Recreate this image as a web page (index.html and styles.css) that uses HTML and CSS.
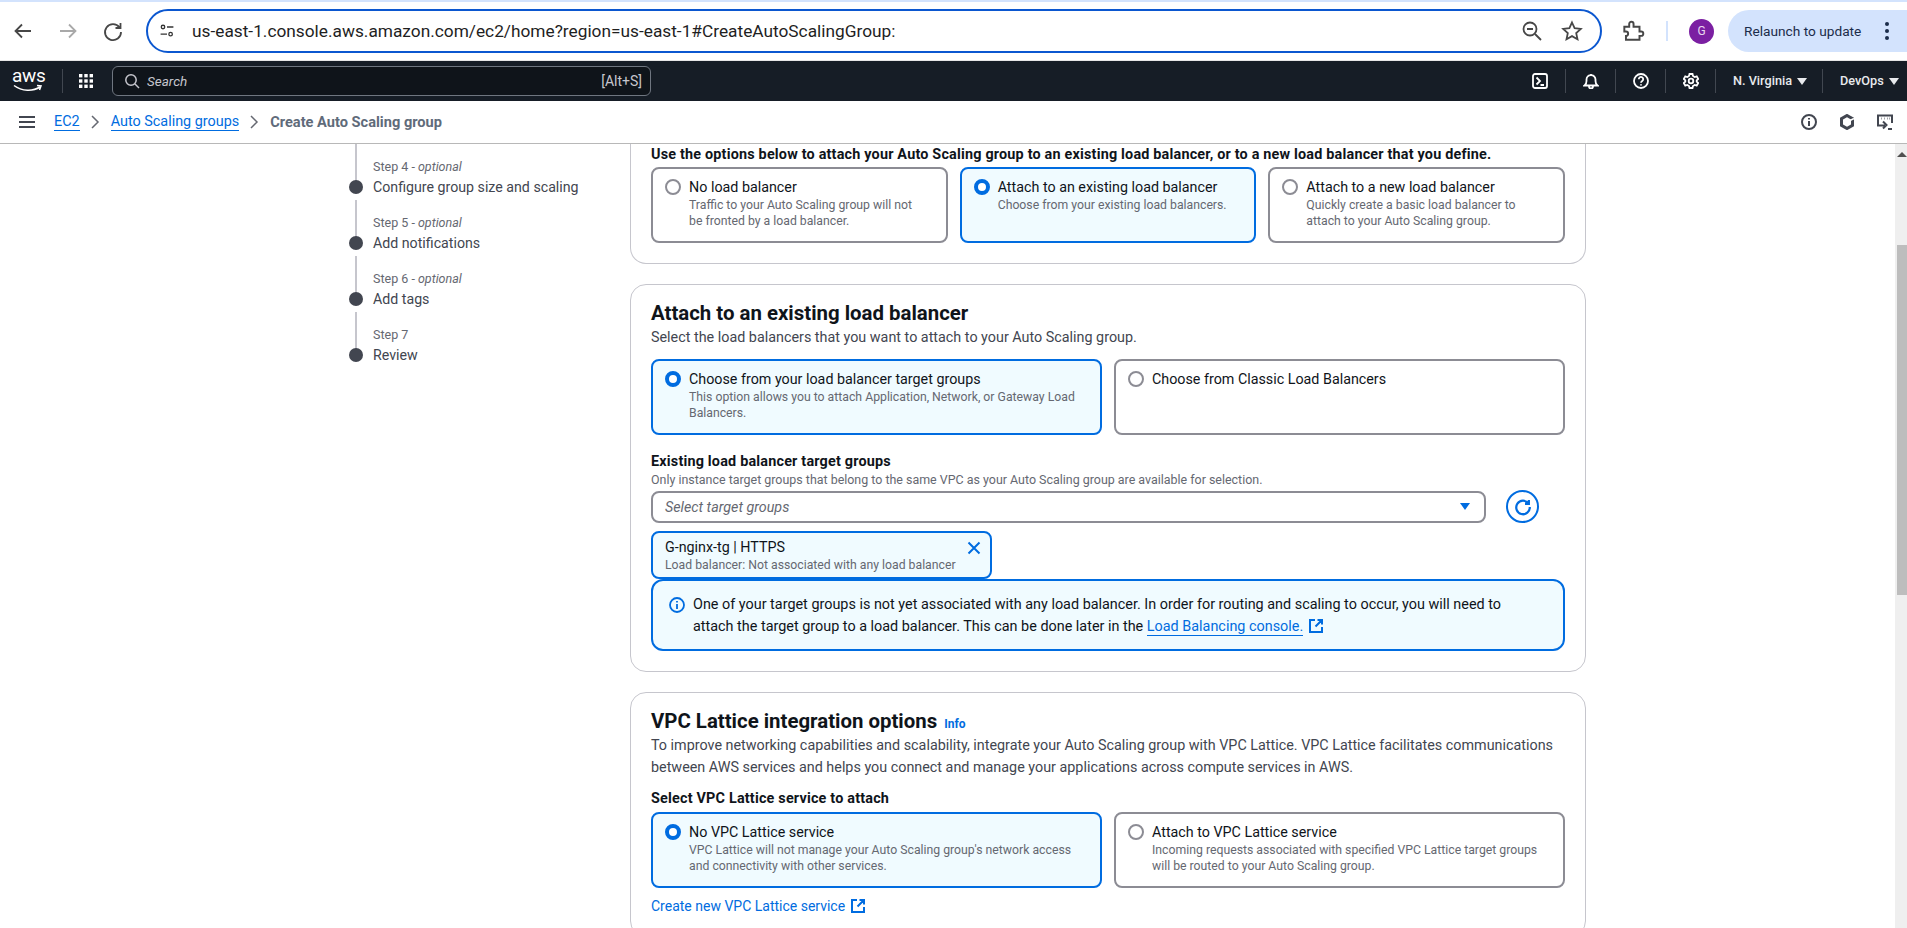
FILE: index.html
```html
<!DOCTYPE html>
<html lang="en">
<head>
<meta charset="utf-8">
<title>Create Auto Scaling group</title>
<link rel="stylesheet" href="styles.css">
</head>
<body>

<div class="tabstrip"></div>

<div class="toolbar">
  <svg class="tb-ico" viewBox="0 0 24 24"><path d="M20 12H5M11 5.500L4.500 12l6.500 6.500"/></svg>
  <svg class="tb-ico off" viewBox="0 0 24 24"><path d="M4 12h15M13 5.500l6.500 6.500-6.500 6.500"/></svg>
  <svg class="tb-ico" viewBox="0 0 24 24"><path d="M18.500 8.500A8 8 0 1 0 20 13M19.500 4v5h-5"/></svg>
  <div class="omnibox">
    <svg class="omni-tune" viewBox="0 0 20 20"><circle cx="5" cy="5" r="2.200"/><path d="M10 5h8M2 14h8"/><circle cx="14.500" cy="14" r="2.200"/></svg>
    <span class="url">us-east-1.console.aws.amazon.com/ec2/home?region=us-east-1#CreateAutoScalingGroup:</span>
    <svg class="omni-ico" viewBox="0 0 24 24"><circle cx="10" cy="10" r="6.500"/><path d="M7 10h6M15 15l6 6"/></svg>
    <svg class="omni-ico" viewBox="0 0 24 24"><path d="M12 3.500l2.600 5.700 6.200.7-4.600 4.200 1.300 6.100L12 17.100l-5.500 3.100 1.300-6.100-4.600-4.200 6.200-.7z"/></svg>
  </div>
  <svg class="tb-ico ext" viewBox="0 0 24 24"><path d="M4 8h4.500V5.500a2 2 0 0 1 4 0V8H18v4.500h1.500a2 2 0 0 1 0 4H18V20H5.500v-3.500a2 2 0 0 0 0-4H4z"/></svg>
  <span class="tb-sep"></span>
  <span class="avatar">G</span>
  <div class="relaunch">Relaunch to update <span class="dots"><i></i><i></i><i></i></span></div>
</div>

<header class="topnav">
  <div class="aws-logo">aws<svg viewBox="0 0 30 9"><path d="M1 1.500c8 6 19 6 26 1.500M24 1.500l4 .5-1.500 4"/></svg></div>
  <span class="nav-div"></span>
  <svg class="grid-ico" viewBox="0 0 16 16"><rect x="1" y="1" width="3.400" height="3.400"/><rect x="6.300" y="1" width="3.400" height="3.400"/><rect x="11.600" y="1" width="3.400" height="3.400"/><rect x="1" y="6.300" width="3.400" height="3.400"/><rect x="6.300" y="6.300" width="3.400" height="3.400"/><rect x="11.600" y="6.300" width="3.400" height="3.400"/><rect x="1" y="11.600" width="3.400" height="3.400"/><rect x="6.300" y="11.600" width="3.400" height="3.400"/><rect x="11.600" y="11.600" width="3.400" height="3.400"/></svg>
  <div class="searchbox">
    <svg class="nav-ico small" viewBox="0 0 16 16"><circle cx="7" cy="7" r="5.200"/><path d="M11 11l4 4"/></svg>
    <em>Search</em>
    <span class="kbd">[Alt+S]</span>
  </div>
  <div class="nav-right">
    <div class="nav-item"><svg class="nav-ico" viewBox="0 0 16 16"><rect x="1" y="1" width="14" height="14" rx="2"/><path d="M4.500 4.500L8 8l-3.500 3.500M8.500 12H12"/></svg></div>
    <div class="nav-item"><svg class="nav-ico" viewBox="0 0 16 16"><path d="M1.500 12.500h13c-1.500-1-2-2.500-2-4.500V6.500a4.500 4.500 0 0 0-9 0V8c0 2-.5 3.500-2 4.500zM6 13v.5a2 2 0 0 0 4 0V13M8 1v1"/></svg></div>
    <div class="nav-item"><svg class="nav-ico" viewBox="0 0 16 16"><circle cx="8" cy="8" r="7"/><path d="M5.800 6.200a2.200 2.200 0 1 1 3.400 1.800c-.8.500-1.200 1-1.200 1.800M8 11.200v1.300"/></svg></div>
    <div class="nav-item"><svg class="nav-ico" viewBox="0 0 16 16"><circle cx="8" cy="8" r="2.300"/><path d="M6.500 1h3l.5 2 1.700 1 2-.6 1.500 2.600-1.500 1.400v1.200l1.500 1.400-1.500 2.600-2-.6-1.700 1-.5 2h-3l-.5-2-1.700-1-2 .6L.8 10l1.500-1.400V7.400L.8 6l1.500-2.600 2 .6 1.700-1z"/></svg></div>
    <div class="nav-item text region">N. Virginia <span class="caret"></span></div>
    <div class="nav-item text acct">DevOps <span class="caret"></span></div>
  </div>
</header>

<div class="crumbbar">
  <div class="burger"><i></i><i></i><i></i></div>
  <a class="crumb">EC2</a>
  <svg class="chev" viewBox="0 0 10 16"><path d="M2 2l6 6-6 6"/></svg>
  <a class="crumb">Auto Scaling groups</a>
  <svg class="chev" viewBox="0 0 10 16"><path d="M2 2l6 6-6 6"/></svg>
  <span class="crumb-now">Create Auto Scaling group</span>
  <div class="crumb-tools">
    <svg class="tool-ico" viewBox="0 0 16 16"><circle cx="8" cy="8" r="7"/><path d="M8 7v5M8 4v1.600"/></svg>
    <svg class="tool-ico hex" viewBox="0 0 16 16"><path d="M8 1.500l5.500 3.200v6.600L8 14.500l-5.500-3.200V4.700z"/><path class="hex-cut" d="M8 8l7-3.500"/></svg>
    <svg class="tool-ico" viewBox="0 0 16 16"><path d="M8 11.500H1V1.500h14V9M4 4.500h.5M7 4.500h.5M10 4.500h.5M13 4.500h-.5M6 7.500l3.500 3.500L6 14.500M11 15h4"/></svg>
  </div>
</div>

<div class="page">
  <nav class="steps">
    <div class="step"><small>Step 4 - <em>optional</em></small><span>Configure group size and scaling</span></div>
    <div class="step"><small>Step 5 - <em>optional</em></small><span>Add notifications</span></div>
    <div class="step"><small>Step 6 - <em>optional</em></small><span>Add tags</span></div>
    <div class="step"><small>Step 7</small><span>Review</span></div>
  </nav>

  <main class="content">
    <section class="card card-cut">
      <p class="field-label">Use the options below to attach your Auto Scaling group to an existing load balancer, or to a new load balancer that you define.</p>
      <div class="tiles three">
        <div class="tile"><span class="radio"></span><div><b>No load balancer</b><p>Traffic to your Auto Scaling group will not<br>be fronted by a load balancer.</p></div></div>
        <div class="tile on"><span class="radio"></span><div><b>Attach to an existing load balancer</b><p>Choose from your existing load balancers.</p></div></div>
        <div class="tile"><span class="radio"></span><div><b>Attach to a new load balancer</b><p>Quickly create a basic load balancer to<br>attach to your Auto Scaling group.</p></div></div>
      </div>
    </section>

    <section class="card">
      <h2>Attach to an existing load balancer</h2>
      <p class="desc">Select the load balancers that you want to attach to your Auto Scaling group.</p>
      <div class="tiles two">
        <div class="tile on"><span class="radio"></span><div><b>Choose from your load balancer target groups</b><p>This option allows you to attach Application, Network, or Gateway Load<br>Balancers.</p></div></div>
        <div class="tile"><span class="radio"></span><div><b>Choose from Classic Load Balancers</b></div></div>
      </div>
      <p class="field-label mt">Existing load balancer target groups</p>
      <p class="hint">Only instance target groups that belong to the same VPC as your Auto Scaling group are available for selection.</p>
      <div class="select-row">
        <div class="select"><em>Select target groups</em><span class="caret blue"></span></div>
        <button class="refresh"><svg viewBox="0 0 16 16"><path d="M12.800 4.800A6 6 0 1 0 14 8M13.200 1.800v3.400H9.800"/></svg></button>
      </div>
      <div class="token">
        <div><b>G-nginx-tg | HTTPS</b><p>Load balancer: Not associated with any load balancer</p></div>
        <svg class="token-x" viewBox="0 0 16 16"><path d="M2.500 2.500l11 11M13.500 2.500l-11 11"/></svg>
      </div>
      <div class="alert">
        <svg class="alert-ico" viewBox="0 0 16 16"><circle cx="8" cy="8" r="7"/><path d="M8 7v5M8 4v1.600"/></svg>
        <p>One of your target groups is not yet associated with any load balancer. In order for routing and scaling to occur, you will need to attach the target group to a load balancer. This can be done later in the <a class="link">Load Balancing console.</a> <svg class="ext-ico" viewBox="0 0 16 16"><path d="M7 2H2v12h12V9M9.500 2H14v4.500M14 2L7.500 8.500"/></svg></p>
      </div>
    </section>

    <section class="card">
      <h2>VPC Lattice integration options <a class="info">Info</a></h2>
      <p class="desc">To improve networking capabilities and scalability, integrate your Auto Scaling group with VPC Lattice. VPC Lattice facilitates communications between AWS services and helps you connect and manage your applications across compute services in AWS.</p>
      <p class="field-label mt2">Select VPC Lattice service to attach</p>
      <div class="tiles two">
        <div class="tile on"><span class="radio"></span><div><b>No VPC Lattice service</b><p>VPC Lattice will not manage your Auto Scaling group's network access<br>and connectivity with other services.</p></div></div>
        <div class="tile"><span class="radio"></span><div><b>Attach to VPC Lattice service</b><p>Incoming requests associated with specified VPC Lattice target groups<br>will be routed to your Auto Scaling group.</p></div></div>
      </div>
      <p class="create"><a class="plain-link">Create new VPC Lattice service</a> <svg class="ext-ico" viewBox="0 0 16 16"><path d="M7 2H2v12h12V9M9.500 2H14v4.500M14 2L7.500 8.500"/></svg></p>
    </section>
  </main>

  <div class="scrollbar"><span class="sb-up"></span><div class="thumb"></div></div>
</div>

</body>
</html>
```

FILE: styles.css
```css
*{box-sizing:border-box;margin:0;padding:0;}
html,body{height:928px;overflow:hidden;}
body{display:flex;flex-direction:column;background:#fff;color:#0f141a;font-family:Roboto,"Liberation Sans",sans-serif;font-size:14.3px;line-height:20px;}
svg{fill:none;stroke:currentColor;flex:none;}

/* browser chrome */
.tabstrip{height:2px;background:#d3e3fd;flex:none;}
.toolbar{height:58px;flex:none;display:flex;align-items:center;padding-left:11px;background:#fff;color:#474747;}
.tb-ico{width:24px;height:24px;stroke-width:1.8;margin-right:21px;}
.tb-ico.off{color:#a9a9a9;}
.tb-ico.ext{margin:0 0 0 18px;width:26px;height:26px;}
.omnibox{width:1456px;height:44px;border:2.5px solid #0b57d0;border-radius:22px;display:flex;align-items:center;padding:0 16px 0 11px;}
.omni-tune{width:16px;height:16px;stroke-width:1.6;margin-right:17px;color:#333;}
.url{flex:1;font-size:17.3px;color:#1f1f1f;}
.omni-ico{width:24px;height:24px;stroke-width:1.8;margin-left:16px;}
.tb-sep{width:2px;height:20px;background:#d3e3fd;margin:0 21px 0 20px;}
.avatar{width:25px;height:25px;border-radius:50%;background:#7b1fa2;color:#e8d6ef;font-size:12px;display:flex;align-items:center;justify-content:center;}
.relaunch{margin-left:14px;flex:1;height:42px;background:#d3e3fd;border-radius:21px 0 0 21px;display:flex;align-items:center;padding-left:16px;font-size:13.7px;color:#1b2c4a;white-space:pre;}
.dots{display:flex;flex-direction:column;gap:3px;margin-left:20px;}
.dots i{width:4px;height:4px;border-radius:50%;background:#1b2c4a;}

/* aws top bar */
.topnav{height:41px;flex:none;background:#161d26;display:flex;align-items:center;color:#fff;border-top:1px solid #e6e6e6;}
.aws-logo{width:32px;height:27px;margin-left:12px;font-size:19px;line-height:16px;text-align:center;letter-spacing:-.3px;color:#fff;}
.aws-logo svg{display:block;width:30px;height:9px;margin-left:1px;stroke-width:1.5;color:#fff;}
.nav-div{width:1px;height:24px;background:#414750;margin:0 15px 0 18px;}
.grid-ico{width:16px;height:16px;fill:#fff;stroke:none;}
.searchbox{width:539px;height:30px;border:1.5px solid #6f7680;border-radius:6px;background:#0f141a;display:flex;align-items:center;padding:0 8px 0 11px;margin-left:18px;color:#c6c6cd;}
.searchbox em{font-size:13.5px;margin-left:7px;flex:1;}
.kbd{font-size:14px;}
.nav-ico{width:16px;height:16px;stroke-width:1.8;color:#fff;}
.nav-ico.small{color:#c6c6cd;stroke-width:1.5;}
.nav-right{margin-left:auto;display:flex;align-items:center;height:24px;}
.nav-item{height:24px;width:50px;display:flex;align-items:center;justify-content:center;border-left:1px solid #414750;}
.nav-item:first-child{border-left:0;}
.nav-item.text{font-size:12.7px;font-weight:500;color:#e8eaed;justify-content:flex-start;gap:5px;white-space:nowrap;padding-left:17px;}
.nav-item.region{width:107px;}
.nav-item.acct{width:85px;}
.caret{display:inline-block;width:0;height:0;border-left:5px solid transparent;border-right:5px solid transparent;border-top:7px solid #e8eaed;}
.caret.blue{border-top-color:#006ce0;}

/* breadcrumb */
.crumbbar{height:43px;flex:none;display:flex;align-items:center;padding-left:19px;border-bottom:1px solid #b8b8b8;background:#fff;}
.burger{width:16px;display:flex;flex-direction:column;gap:3px;margin-right:19px;}
.burger i{height:2px;background:#424650;}
.crumb{color:#006ce0;font-size:14.4px;border-bottom:1px solid #006ce0;line-height:17px;}
.chev{width:10px;height:16px;margin:0 11px 0 10px;color:#656871;stroke-width:1.5;}
.crumb-now{font-size:14.6px;font-weight:700;color:#5f6b7a;}
.crumb-tools{margin-left:auto;display:flex;gap:22px;margin-right:14px;color:#424650;}
.tool-ico{width:16px;height:16px;stroke-width:2;}
.tool-ico.hex{stroke-width:3;}
.hex-cut{stroke:#fff;stroke-width:1.5;}

/* page */
.page{flex:1;display:flex;overflow:hidden;min-height:0;}
.steps{width:630px;flex:none;padding-left:349px;}
.step{position:relative;height:56px;padding:15px 0 0 24px;white-space:nowrap;display:flex;flex-direction:column;color:#424650;}
.step small{font-size:12.5px;line-height:16px;color:#656871;}
.step span{font-size:14.2px;line-height:22px;margin-top:1px;}
.step::before{content:"";position:absolute;left:6px;top:0;height:40px;width:2px;background:#c6c6cd;}
.step::after{content:"";position:absolute;left:0;top:36px;width:14px;height:14px;border-radius:50%;background:#424650;}

.content{width:956px;flex:none;display:flex;flex-direction:column;gap:20px;}
.card{border:1px solid #c6c6cd;border-radius:16px;padding:0 20px 20px;background:#fff;flex:none;}
.card-cut{border-top:0;border-radius:0 0 16px 16px;}
.card-cut .field-label{padding-top:2px;}
.card-cut .tiles{margin-top:3px;}
h2{font-size:20.4px;line-height:24px;font-weight:700;padding-top:16px;}
.info{font-size:12px;line-height:1;font-weight:700;color:#006ce0;margin-left:2px;}
.desc{color:#424650;font-size:14.35px;line-height:22px;margin-top:2px;}
.field-label{font-size:14.4px;letter-spacing:.19px;font-weight:700;line-height:18px;}
.field-label.mt{margin-top:17px;line-height:20px;}
.field-label.mt2{margin-top:11px;}
.hint{font-size:12.45px;line-height:16px;color:#656871;}

.tiles{display:grid;gap:12px;margin-top:4px;}
.desc+.tiles{margin-top:10px;}
.tiles.three{grid-template-columns:repeat(3,1fr);}
.tiles.two{grid-template-columns:repeat(2,1fr);}
.tile{border:2px solid #8c8c94;border-radius:8px;padding:8px 12px 0;height:76px;display:flex;gap:8px;background:#fff;}
.tile.on{border-color:#006ce0;background:#f0fbff;}
.tile b{font-weight:400;display:block;line-height:20px;}
.tile p{font-size:12.25px;line-height:16px;color:#656871;white-space:nowrap;}
.radio{width:16px;height:16px;border-radius:50%;border:2px solid #8c8c94;background:#fff;flex:none;margin-top:2px;}
.tile.on .radio{border:4.5px solid #006ce0;}

.select-row{display:flex;align-items:center;gap:20px;margin-top:2px;}
.select{width:835px;height:32px;border:2px solid #8c8c94;border-radius:8px;display:flex;align-items:center;justify-content:space-between;padding:0 14px 0 12px;color:#656871;}
.refresh{width:33px;height:33px;border-radius:50%;border:2px solid #006ce0;background:#fff;color:#006ce0;display:flex;align-items:center;justify-content:center;}
.refresh svg{width:18px;height:18px;stroke-width:2;}
.token{width:341px;height:48px;margin-top:8px;border:2px solid #006ce0;border-radius:8px;background:#f0fbff;display:flex;justify-content:space-between;padding:4px 8px 0 12px;}
.token b{font-weight:400;display:block;line-height:20px;}
.token p{font-size:12.25px;line-height:16px;color:#656871;}
.token-x{width:16px;height:16px;color:#006ce0;stroke-width:2;margin-top:3px;}
.alert{height:72px;border:2px solid #006ce0;border-radius:12px;background:#f0fbff;display:flex;gap:8px;padding:13px 50px 0 16px;}
.alert-ico{width:16px;height:16px;color:#006ce0;stroke-width:1.8;margin-top:3px;}
.alert p{font-size:14.4px;line-height:22px;}
.link{color:#006ce0;border-bottom:1px solid #006ce0;}
.ext-ico{width:16px;height:16px;color:#006ce0;stroke-width:2;vertical-align:-3px;margin-left:1px;}
.plain-link{color:#006ce0;}
.create{margin-top:8px;font-size:14px;}

.scrollbar{margin-left:auto;width:12px;background:#efefef;flex:none;padding:8px 0 0 2px;}
.sb-up{display:block;width:0;height:0;border-left:5px solid transparent;border-right:5px solid transparent;border-bottom:5px solid #505050;}
.thumb{width:10px;height:350px;margin-top:88px;background:#bdbdbd;}
```
